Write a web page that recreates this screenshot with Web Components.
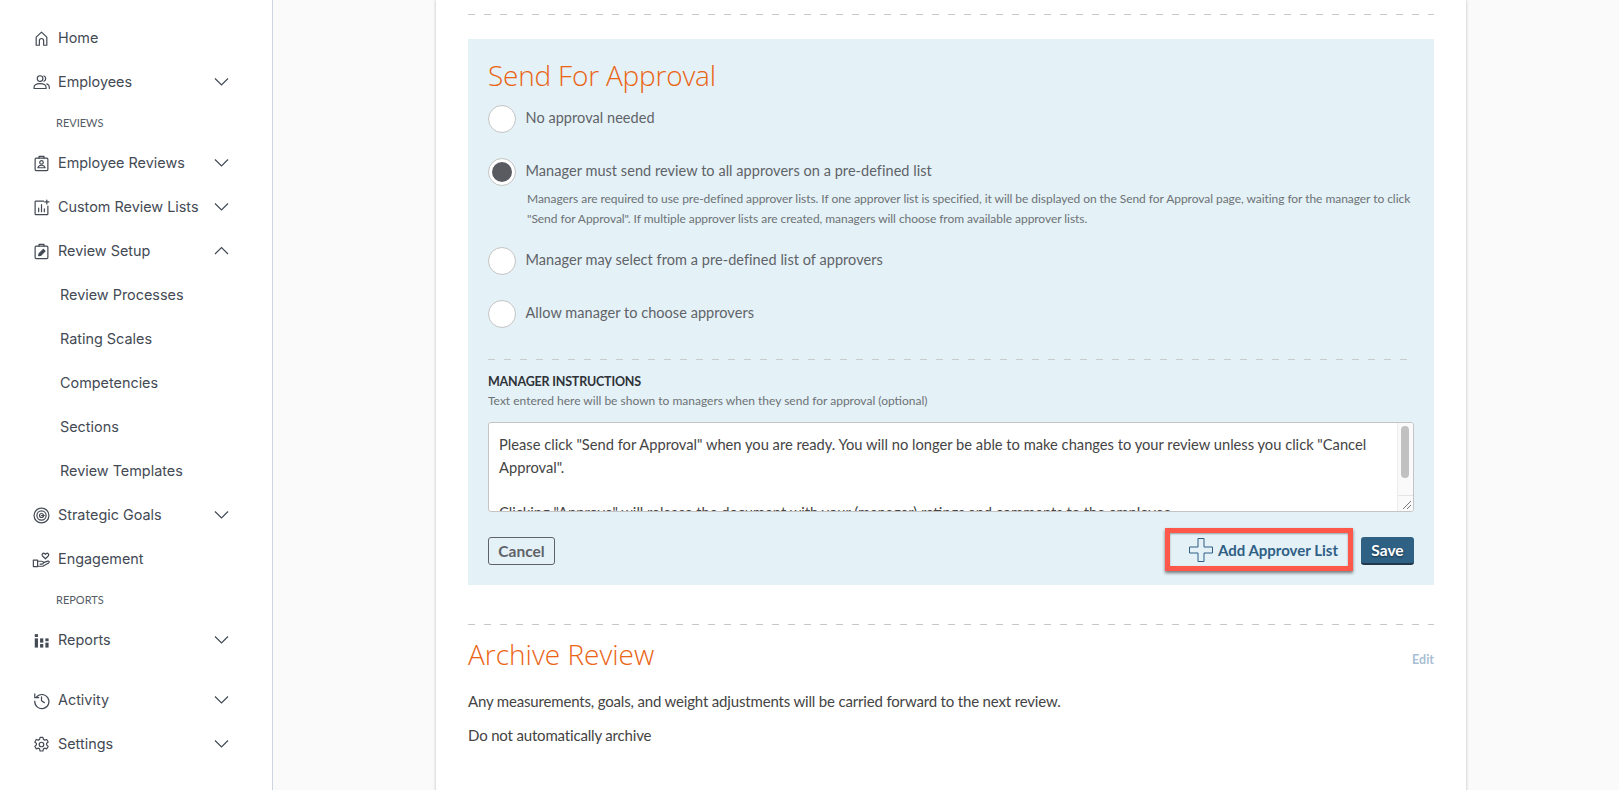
<!DOCTYPE html>
<html>
<head>
<meta charset="utf-8">
<title>Send For Approval</title>
<style>
  html, body { margin: 0; height: 100%; overflow: hidden; background: #fafafa; }
  body { display: flex; font-family: "Lato", "Open Sans", sans-serif; }
</style>
</head>
<body>
<side-nav>
  <nav-item icon="home">Home</nav-item>
  <nav-item icon="people" chevron="down">Employees</nav-item>
  <nav-label>REVIEWS</nav-label>
  <nav-item icon="badge" chevron="down">Employee Reviews</nav-item>
  <nav-item icon="chart" chevron="down">Custom Review Lists</nav-item>
  <nav-item icon="edit" chevron="up">Review Setup</nav-item>
  <nav-item sub>Review Processes</nav-item>
  <nav-item sub>Rating Scales</nav-item>
  <nav-item sub>Competencies</nav-item>
  <nav-item sub>Sections</nav-item>
  <nav-item sub>Review Templates</nav-item>
  <nav-item icon="target" chevron="down">Strategic Goals</nav-item>
  <nav-item icon="hand">Engagement</nav-item>
  <nav-label>REPORTS</nav-label>
  <nav-item icon="bars" chevron="down">Reports</nav-item>
  <nav-item icon="history" chevron="down" spaced>Activity</nav-item>
  <nav-item icon="gear" chevron="down">Settings</nav-item>
</side-nav>
<main-area>
  <review-card>
    <approval-panel>
      <radio-option>No approval needed</radio-option>
      <radio-option checked>Manager must send review to all approvers on a pre-defined list
        <span slot="help">Managers are required to use pre-defined approver lists. If one approver list is specified, it will be displayed on the Send for Approval page, waiting for the manager to click "Send for Approval". If multiple approver lists are created, managers will choose from available approver lists.</span>
      </radio-option>
      <radio-option>Manager may select from a pre-defined list of approvers</radio-option>
      <radio-option>Allow manager to choose approvers</radio-option>
    </approval-panel>
    <archive-section></archive-section>
  </review-card>
</main-area>

<script>
const ICONS = {
  home: '<path d="M4.500 21.500V10L12 3l7.500 7v11.500h-4.500v-6.500a3 3 0 0 0-6 0v6.500z"/>',
  people: '<circle cx="10" cy="6.500" r="4"/><path d="M1.500 20.500v-1.500C1.500 15.500 5 13.500 10 13.500s8.500 2 8.500 5.500v1.500z"/><path d="M15.500 2.800a4 4 0 0 1 0 7.400M19.500 14c2 .8 3.500 2.300 3.500 4.500v2"/>',
  badge: '<rect x="3" y="4.500" width="18" height="17.500" rx="1.500"/><path d="M8.500 4.500V2h7v2.500"/><circle cx="12" cy="10.500" r="2.500"/><path d="M7 18c.6-2.400 2.400-3.500 5-3.500s4.400 1.100 5 3.500z"/>',
  chart: '<path d="M15 3H4a1 1 0 0 0-1 1v17a1 1 0 0 0 1 1h16a1 1 0 0 0 1-1V10"/><path d="M8 18v-5M12 18V8M16 18v-4M19.500 1.500v5.500M16.500 4.200h6"/>',
  edit: '<rect x="3" y="4.500" width="18" height="17.500" rx="1.500"/><path d="M8.500 4.500V2h7v2.500"/><path d="M8 18l.6-3 6-6 2.400 2.400-6 6z" fill="currentColor"/>',
  target: '<circle cx="12" cy="12" r="10.500"/><circle cx="12" cy="12" r="6.500"/><circle cx="12" cy="12" r="2.800"/><path d="M12 12h4"/>',
  hand: '<rect x=".5" y="13" width="6" height="9"/><path d="M6.500 14.500H12c2 0 2.800 1 2.800 2.200S13.500 18.500 12.500 18.500H10M14.800 16.500l6-2.200c2-.6 2.800 1.500 1.200 2.600L14 21.500H6.500"/><path d="M17.500 11l-4-3.900c-2-2.200.8-5.400 3.200-3.200l.8.800.8-.8c2.400-2.200 5.200 1 3.200 3.200z"/>',
  bars: '<g fill="currentColor" stroke="none"><rect x="2.500" y="3" width="4.500" height="4"/><rect x="2.500" y="9" width="4.500" height="13"/><rect x="10" y="9" width="4.500" height="6"/><rect x="10" y="17" width="4.500" height="5"/><rect x="17.500" y="9" width="4.500" height="4"/><rect x="17.500" y="15" width="4.500" height="7"/></g>',
  history: '<path d="M4.500 7.500A10 10 0 1 1 2.500 13"/><path d="M2.500 2.500v5.500h5.500"/><path d="M12 7v5.500l4 2.500"/>',
  gear: '<circle cx="12" cy="12" r="3.200"/><path d="M10 1.800h4l.7 3 1.800 1 2.900-.9 2 3.500-2.200 2v2.200l2.200 2-2 3.500-2.900-.9-1.800 1-.7 3h-4l-.7-3-1.800-1-2.900.9-2-3.500 2.200-2V10.400l-2.200-2 2-3.500 2.900.9 1.800-1z"/>'
};

class SideNav extends HTMLElement {
  constructor() {
    super();
    this.attachShadow({ mode: "open" }).innerHTML = `
      <style>
        :host {
          display: flex;
          flex-direction: column;
          box-sizing: border-box;
          flex: 0 0 273px;
          height: 100%;
          padding-top: 16px;
          background: #fff;
          border-right: 1px solid #cfd5e0;
        }
      </style>
      <slot></slot>`;
  }
}
customElements.define("side-nav", SideNav);

class NavItem extends HTMLElement {
  constructor() {
    super();
    const icon = ICONS[this.getAttribute("icon")];
    const chevron = this.getAttribute("chevron");
    const points = chevron === "up" ? "1,8 7.500,1.500 14,8" : "1,1.500 7.500,8 14,1.500";
    this.attachShadow({ mode: "open" }).innerHTML = `
      <style>
        :host {
          display: flex;
          align-items: center;
          height: 44px;
          flex: none;
          padding-left: 33px;
          color: #434a54;
          font: 14.400px/20px "Inter", "Open Sans", sans-serif;
        }
        :host([sub]) { padding-left: 60px; }
        :host([spaced]) { margin-top: 16px; }
        .icon { flex: none; width: 17px; height: 17px; margin-right: 8px; color: #434a54; }
        .icon svg { display: block; overflow: visible; fill: none; stroke: currentColor; stroke-width: 1.700; stroke-linejoin: round; stroke-linecap: round; width: 17px; height: 17px; }
        .label { flex: 1; white-space: nowrap; }
        .chev { flex: none; width: 15px; height: 10px; margin-right: 43px; }
        .chev polyline { fill: none; stroke: #434a54; stroke-width: 1.200; }
      </style>
      ${icon ? `<span class="icon"><svg viewBox="0 0 24 24">${icon}</svg></span>` : ""}
      <span class="label"><slot></slot></span>
      ${chevron ? `<svg class="chev" viewBox="0 0 15 10"><polyline points="${points}"/></svg>` : ""}`;
  }
}
customElements.define("nav-item", NavItem);

class NavLabel extends HTMLElement {
  constructor() {
    super();
    this.attachShadow({ mode: "open" }).innerHTML = `
      <style>
        :host {
          display: flex;
          align-items: center;
          flex: none;
          height: 37px;
          padding-left: 56px;
          color: #555c66;
          font: 11px/14px "Lato", "Open Sans", sans-serif;
        }
      </style>
      <slot></slot>`;
  }
}
customElements.define("nav-label", NavLabel);

class MainArea extends HTMLElement {
  constructor() {
    super();
    this.attachShadow({ mode: "open" }).innerHTML = `
      <style>
        :host { display: block; flex: 1; min-width: 0; padding-left: 163px; }
      </style>
      <slot></slot>`;
  }
}
customElements.define("main-area", MainArea);

class DashedRule extends HTMLElement {
  constructor() {
    super();
    this.attachShadow({ mode: "open" }).innerHTML = `
      <style>
        :host {
          display: block;
          height: 1px;
          background: repeating-linear-gradient(to right, var(--dash, #c8c8c8) 0 7px, transparent 7px 16px);
        }
      </style>`;
  }
}
customElements.define("dashed-rule", DashedRule);

class ReviewCard extends HTMLElement {
  constructor() {
    super();
    this.attachShadow({ mode: "open" }).innerHTML = `
      <style>
        :host {
          display: block;
          box-sizing: border-box;
          width: 1030px;
          height: 800px;
          padding: 14px 32px 0;
          background: #fff;
          box-shadow: 0 0 3px rgba(0,0,0,.25);
          color: #444;
        }
        .rule { margin-bottom: 24px; }
      </style>
      <dashed-rule class="rule"></dashed-rule>
      <slot></slot>`;
  }
}
customElements.define("review-card", ReviewCard);

class RadioOption extends HTMLElement {
  constructor() {
    super();
    this.attachShadow({ mode: "open" }).innerHTML = `
      <style>
        :host {
          display: grid;
          grid-template-columns: 28px 1fr;
          column-gap: 9.500px;
          color: #5f6368;
          font-size: 14.500px;
          letter-spacing: .05px;
          line-height: 26px;
          margin-bottom: 25px;
        }
        :host([checked]) { margin-bottom: 18px; }
        .dot {
          box-sizing: border-box;
          width: 28px;
          height: 28px;
          border: 1px solid #c4c4c4;
          border-radius: 50%;
          background: #fff;
          display: flex;
          align-items: center;
          justify-content: center;
        }
        :host([checked]) .dot::after {
          content: "";
          width: 20px;
          height: 20px;
          border-radius: 50%;
          background: #5a5b60;
        }
        .help { display: none; }
        :host([checked]) .help {
          grid-column: 2;
          display: block;
          margin: 3px 0 0 1.500px;
          font-size: 12px;
          letter-spacing: -.05px;
          line-height: 20px;
          color: #6d7175;
          max-width: 895px;
        }
      </style>
      <span class="dot"></span>
      <span><slot></slot></span>
      <span class="help"><slot name="help"></slot></span>`;
  }
}
customElements.define("radio-option", RadioOption);

class InstructionsBox extends HTMLElement {
  constructor() {
    super();
    this.attachShadow({ mode: "open" }).innerHTML = `
      <style>
        :host {
          display: flex;
          box-sizing: border-box;
          height: 90px;
          background: #fff;
          border: 1px solid #c4c4c4;
          border-radius: 3px;
          overflow: hidden;
        }
        .text {
          flex: 1;
          padding: 10px 10px 0;
          font-size: 14.700px;
          line-height: 22.500px;
          color: #444;
          overflow: hidden;
        }
        p { margin: 0 0 22.500px; }
        .bar {
          flex: none;
          display: flex;
          flex-direction: column;
          width: 15px;
          background: #fafafa;
          border-left: 1px solid #ececec;
        }
        .thumb { width: 8px; height: 52px; margin: 3px 0 0 3px; border-radius: 4px; background: #c1c1c1; }
        .grip { margin-top: auto; width: 15px; height: 15px; border-top: 1px solid #e4e4e4; }
        svg { display: block; }
      </style>
      <div class="text">
        <p>Please click "Send for Approval" when you are ready. You will no longer be able to make changes to your review unless you click "Cancel Approval".</p>
        <p>Clicking "Approve" will release the document with your (manager) ratings and comments to the employee.</p>
      </div>
      <div class="bar">
        <div class="thumb"></div>
        <div class="grip"><svg width="15" height="14" viewBox="0 0 15 14"><path d="M13 5L5 13M13 9L9 13" stroke="#777" fill="none"/></svg></div>
      </div>`;
  }
}
customElements.define("instructions-box", InstructionsBox);

class ApprovalPanel extends HTMLElement {
  constructor() {
    super();
    this.attachShadow({ mode: "open" }).innerHTML = `
      <style>
        :host {
          display: block;
          box-sizing: border-box;
          height: 546px;
          padding: 18px 20px 0;
          background: #e4f1f7;
        }
        h2 {
          margin: 0 0 12px;
          font: 300 28px/36px "Open Sans", sans-serif;
          letter-spacing: -.2px;
          color: #ea6414;
        }
        dashed-rule { margin: 31px 6px 0 0; --dash: #c8ccce; }
        .head {
          margin-top: 13px;
          font-size: 12.500px;
          letter-spacing: -.2px;
          line-height: 18px;
          font-weight: 700;
          color: #2f3338;
        }
        .hint { margin-top: 1px; font-size: 12px; line-height: 18px; color: #6d7175; margin-bottom: 12px; }
        .actions {
          display: flex;
          align-items: center;
          margin-top: 25px;
          height: 28px;
        }
        button {
          font: 700 15.500px/26px "Lato", "Open Sans", sans-serif;
          box-sizing: border-box;
          height: 28px;
          padding: 0;
          border-radius: 3px;
        }
        .cancel { width: 67px; background: transparent; border: 1px solid #5f6368; color: #5f6368; }
        .save {
          width: 53px;
          margin-left: 8px;
          border: 0;
          border-bottom: 2px solid #22384a;
          background: #2f6185;
          color: #fff;
          text-shadow: 0 1px 2px rgba(0,0,0,.5);
        }
        .add {
          margin-left: auto;
          margin-bottom: 3px;
          display: flex;
          flex: none;
          align-items: center;
          box-sizing: border-box;
          width: 188px;
          height: 43px;
          border: 5px solid #fd5849;
          box-shadow: 0 2px 3px rgba(0,0,0,.5), inset 0 1px 2px rgba(0,0,0,.35);
          padding-left: 19px;
          color: #2f5f85;
          font-size: 15px;
          font-weight: 700;
          white-space: nowrap;
        }
        .add svg { flex: none; margin-right: 5px; }
      </style>
      <h2>Send For Approval</h2>
      <slot></slot>
      <dashed-rule></dashed-rule>
      <div class="head">MANAGER INSTRUCTIONS</div>
      <div class="hint">Text entered here will be shown to managers when they send for approval (optional)</div>
      <instructions-box></instructions-box>
      <div class="actions">
        <button class="cancel">Cancel</button>
        <div class="add">
          <svg width="24" height="24" viewBox="0 0 24 24"><path d="M9 .5h6v8.500h8.500v6H15v8.500H9V15H.5V9H9z" fill="none" stroke="#2f5f85" stroke-linejoin="round"/></svg>
          Add Approver List
        </div>
        <button class="save">Save</button>
      </div>`;
  }
}
customElements.define("approval-panel", ApprovalPanel);

class ArchiveSection extends HTMLElement {
  constructor() {
    super();
    this.attachShadow({ mode: "open" }).innerHTML = `
      <style>
        :host { display: block; }
        dashed-rule { margin-top: 39px; }
        .top { display: flex; align-items: flex-end; justify-content: space-between; margin-top: 11px; }
        h2 {
          margin: 0;
          font: 300 28px/36px "Open Sans", sans-serif;
          color: #ea6414;
        }
        .edit { font-size: 12.500px; font-weight: 700; line-height: 16px; color: #a9bfd2; margin-bottom: 4px; }
        p { margin: 0; font-size: 15px; letter-spacing: -.17px; line-height: 22px; color: #444; }
        .first { margin-top: 18px; margin-bottom: 12px; }
      </style>
      <dashed-rule></dashed-rule>
      <div class="top"><h2>Archive Review</h2><span class="edit">Edit</span></div>
      <p class="first">Any measurements, goals, and weight adjustments will be carried forward to the next review.</p>
      <p>Do not automatically archive</p>`;
  }
}
customElements.define("archive-section", ArchiveSection);
</script>
</body>
</html>
